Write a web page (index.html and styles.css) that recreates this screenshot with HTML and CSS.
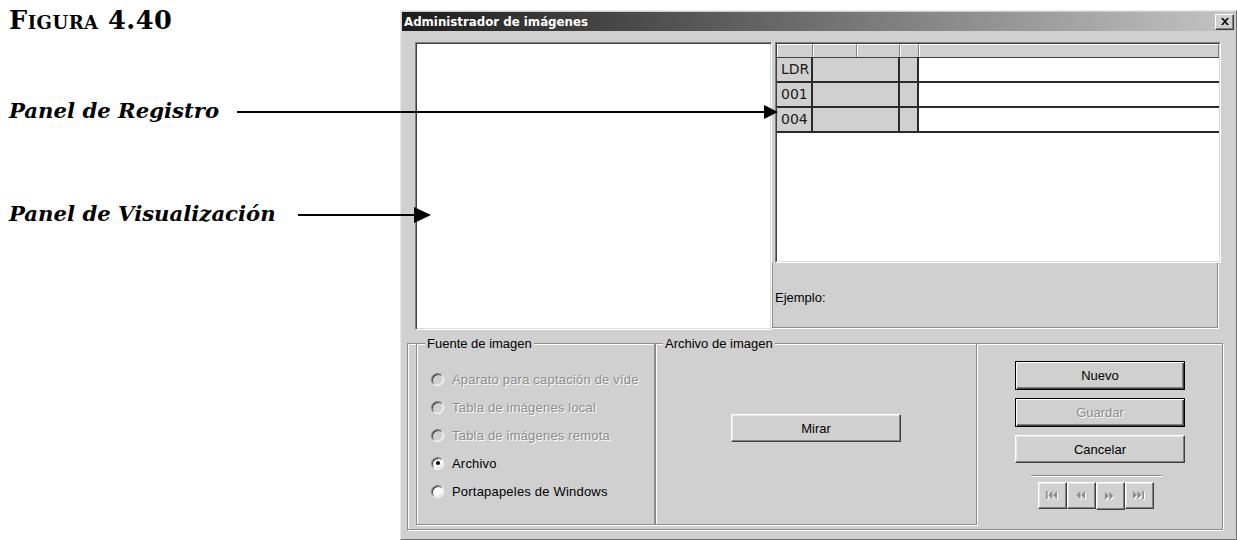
FILE: index.html
```html
<!DOCTYPE html>
<html lang="es">
<head>
    <meta charset="UTF-8">
    <title>Figura 4.40 - Administrador de imágenes</title>
    <link rel="stylesheet" href="styles.css">
</head>
<body>
<div id="page-wrapper">
    <div id="notes">
        <h1 class="fig-title">Figura 4.40</h1>
        <p class="note note-registro">Panel de Registro</p>
        <p class="note note-visual">Panel de Visualización</p>
    </div>

    <div id="win">
        <div class="titlebar">
            <span class="title">Administrador de imágenes</span>
            <span class="close-btn">
                <svg width="8" height="7" viewBox="0 0 8 7"><path d="M0 0h2l2 2.2 2-2.2h2l-3 3.5 3 3.5h-2l-2-2.2-2 2.2h-2l3-3.5z" fill="#000"/></svg>
            </span>
        </div>
        <div class="win-body">
            <div class="top-row">
                <div class="viewer"></div>
                <div class="record-col">
                    <div class="grid">
                        <div class="grid-inner">
                            <div class="grid-head">
                                <span class="hc hc-tag"></span>
                                <span class="hc hc-i1"></span>
                                <span class="hc hc-i2"></span>
                                <span class="hc hc-sf"></span>
                                <span class="hc hc-data"></span>
                            </div>
                            <div class="grid-row">
                                <span class="c-tag">LDR</span><span class="c-ind"></span><span class="c-sf"></span><span class="c-data"></span>
                            </div>
                            <div class="grid-row">
                                <span class="c-tag">001</span><span class="c-ind"></span><span class="c-sf"></span><span class="c-data"></span>
                            </div>
                            <div class="grid-row">
                                <span class="c-tag">004</span><span class="c-ind"></span><span class="c-sf"></span><span class="c-data"></span>
                            </div>
                        </div>
                    </div>
                    <div class="sample">Ejemplo:</div>
                </div>
            </div>

            <div class="bottom">
                <fieldset class="grp grp-src">
                    <legend>Fuente de imagen</legend>
                    <div class="grp-body">
                        <label class="radio disabled"><span class="dot"></span>Aparato para captación de víde</label>
                        <label class="radio disabled"><span class="dot"></span>Tabla de imágenes local</label>
                        <label class="radio disabled"><span class="dot"></span>Tabla de imágenes remota</label>
                        <label class="radio checked"><span class="dot"></span>Archivo</label>
                        <label class="radio"><span class="dot"></span>Portapapeles de Windows</label>
                    </div>
                </fieldset>
                <fieldset class="grp grp-file">
                    <legend>Archivo de imagen</legend>
                    <div class="grp-body">
                        <button type="button" class="btn btn-mirar">Mirar</button>
                    </div>
                </fieldset>
                <div class="actions">
                    <button type="button" class="btn btn-default">Nuevo</button>
                    <button type="button" class="btn btn-default is-disabled">Guardar</button>
                    <button type="button" class="btn">Cancelar</button>
                    <div class="sep"></div>
                    <div class="nav">
                        <button type="button" class="btn nav-btn">
                            <svg width="13" height="9" viewBox="0 0 13 9">
                                <g fill="#fff" transform="translate(1 1)"><rect x="0" y="0" width="1.6" height="8"/><path d="M6.5 0L2.5 4 6.5 8z"/><path d="M11 0L7 4 11 8z"/></g>
                                <g fill="#8c8c8c"><rect x="0" y="0" width="1.6" height="8"/><path d="M6.5 0L2.5 4 6.5 8z"/><path d="M11 0L7 4 11 8z"/></g>
                            </svg>
                        </button>
                        <button type="button" class="btn nav-btn">
                            <svg width="11" height="9" viewBox="0 0 11 9">
                                <g fill="#fff" transform="translate(1 1)"><path d="M4.5 0L0.5 4 4.5 8z"/><path d="M9 0L5 4 9 8z"/></g>
                                <g fill="#8c8c8c"><path d="M4.5 0L0.5 4 4.5 8z"/><path d="M9 0L5 4 9 8z"/></g>
                            </svg>
                        </button>
                        <button type="button" class="btn nav-btn">
                            <svg width="11" height="9" viewBox="0 0 11 9">
                                <g fill="#fff" transform="translate(1 1)"><path d="M0 0L4 4 0 8z"/><path d="M4.5 0L8.5 4 4.5 8z"/></g>
                                <g fill="#8c8c8c"><path d="M0 0L4 4 0 8z"/><path d="M4.5 0L8.5 4 4.5 8z"/></g>
                            </svg>
                        </button>
                        <button type="button" class="btn nav-btn">
                            <svg width="13" height="9" viewBox="0 0 13 9">
                                <g fill="#fff" transform="translate(1 1)"><path d="M0 0L4 4 0 8z"/><path d="M4.5 0L8.5 4 4.5 8z"/><rect x="9.4" y="0" width="1.6" height="8"/></g>
                                <g fill="#8c8c8c"><path d="M0 0L4 4 0 8z"/><path d="M4.5 0L8.5 4 4.5 8z"/><rect x="9.4" y="0" width="1.6" height="8"/></g>
                            </svg>
                        </button>
                    </div>
                </div>
            </div>
        </div>
    </div>

    <svg class="arrows" width="1237" height="540" viewBox="0 0 1237 540">
        <line x1="237" y1="112" x2="768" y2="112" stroke="#000" stroke-width="2"/>
        <path d="M764 105L778 112 764 119z" fill="#000"/>
        <line x1="298" y1="215" x2="418" y2="215" stroke="#000" stroke-width="2"/>
        <path d="M414 207L431 215 414 223z" fill="#000"/>
    </svg>
</div>
</body>
</html>
```

FILE: styles.css
```css
* {
    margin: 0;
    padding: 0;
    box-sizing: border-box;
}
html, body {
    height: 100%;
    background-color: #fff;
}
body {
    font-family: "Liberation Sans", Arial, sans-serif;
    font-size: 13px;
    color: #000;
}
#page-wrapper {
    position: relative;
    display: flex;
    width: 1237px;
    height: 540px;
    overflow: hidden;
}

/* annotations on the left */
#notes {
    width: 400px;
    flex-shrink: 0;
    padding: 7px 0 0 9px;
    font-family: "DejaVu Serif", serif;
}
.fig-title {
    font-size: 25.6px;
    line-height: 26px;
    font-weight: bold;
    font-variant: small-caps;
    letter-spacing: 0.5px;
}
.note {
    font-size: 21.2px;
    line-height: 24px;
    font-weight: bold;
    font-style: italic;
}
.note-registro {
    margin-top: 66px;
}
.note-visual {
    margin-top: 79px;
}
.arrows {
    position: absolute;
    left: 0;
    top: 0;
    pointer-events: none;
}

/* dialog window */
#win {
    width: 837px;
    height: 530px;
    margin-top: 10px;
    flex-shrink: 0;
    background-color: #d0d0d0;
    border: 1px solid;
    border-color: #e8e8e8 #707070 #707070 #e8e8e8;
    padding: 1px;
}
.titlebar {
    height: 19px;
    display: flex;
    align-items: center;
    justify-content: space-between;
    padding: 0 1px 0 2px;
    background: linear-gradient(to right, #1c1c1c, #c4c4c4);
}
.title {
    color: #fff;
    font-family: "DejaVu Sans", sans-serif;
    font-weight: bold;
    font-size: 11.8px;
}
.close-btn {
    width: 19px;
    height: 16px;
    display: flex;
    align-items: center;
    justify-content: center;
    background-color: #d0d0d0;
    border: 1px solid;
    border-color: #fff #404040 #404040 #fff;
    box-shadow: inset -1px -1px #808080;
}
.win-body {
    padding: 11px 0 0 5px;
}
.top-row {
    display: flex;
    height: 288px;
    margin-left: 8px;
}
.viewer {
    width: 357px;
    background-color: #fff;
    border: 1px solid;
    border-color: #808080 #fff #fff #808080;
    box-shadow: inset 1px 1px #404040, inset -1px -1px #dcdcdc;
}
.record-col {
    width: 449px;
    display: flex;
    flex-direction: column;
}

/* record grid */
.grid {
    margin-left: 3px;
    height: 221px;
    border: 1px solid;
    border-color: #808080 #fff #fff #808080;
}
.grid-inner {
    height: 100%;
    background-color: #fff;
    border: 1px solid;
    border-color: #404040 #dcdcdc #dcdcdc #404040;
    overflow: hidden;
}
.grid-head {
    display: flex;
    height: 14px;
    background-color: #d0d0d0;
    border-bottom: 1px solid #404040;
}
.hc {
    border-left: 1px solid #fff;
    border-top: 1px solid #fff;
    border-right: 1px solid #808080;
}
.hc-tag { width: 36px; }
.hc-i1 { width: 44px; }
.hc-i2 { width: 43px; }
.hc-sf { width: 19px; }
.hc-data { flex-grow: 1; }
.grid-row {
    display: flex;
    height: 25px;
    border-bottom: 2px solid #2a2a2a;
}
.grid-row span {
    background-color: #d0d0d0;
    border-right: 2px solid #2a2a2a;
}
.grid-row .c-tag {
    width: 36px;
    padding: 3px 0 0 4px;
    font-family: "DejaVu Sans", sans-serif;
    font-size: 14px;
    line-height: 16px;
    color: #1a1a1a;
}
.grid-row .c-ind { width: 87px; }
.grid-row .c-sf { width: 19px; }
.grid-row .c-data {
    flex-grow: 1;
    background-color: #fff;
    border-right: 0;
}
.sample {
    width: 446px;
    height: 65px;
    padding: 27px 0 0 2px;
    border: 1px solid #8c8c8c;
    border-top: 0;
    box-shadow: 1px 1px #fff;
}

/* bottom group */
.bottom {
    display: flex;
    width: 816px;
    height: 187px;
    margin-top: 13px;
    padding-left: 8px;
    border: 1px solid #8c8c8c;
    box-shadow: inset 1px 1px #fff, 1px 1px #fff;
}
.grp {
    margin-top: -8px;
    height: 189px;
    padding: 0;
    border: 1px solid #8c8c8c;
    box-shadow: inset 1px 1px #fff, 1px 1px #fff;
}
.grp legend {
    margin-left: 8px;
    padding: 0 2px;
    line-height: 15px;
    background-color: #d0d0d0;
}
.grp-src {
    width: 239px;
}
.grp-file {
    width: 322px;
}
.grp-file legend {
    margin-left: 7px;
}
.grp-src .grp-body {
    padding: 14px 0 0 14px;
}
.grp-file .grp-body {
    display: flex;
    justify-content: center;
    padding-top: 63px;
}
.radio {
    display: flex;
    align-items: center;
    gap: 8px;
    height: 28px;
    white-space: nowrap;
    letter-spacing: 0.2px;
}
.dot {
    position: relative;
    width: 13px;
    height: 13px;
    flex-shrink: 0;
    border-radius: 50%;
    border: 1px solid;
    border-color: #808080 #fff #fff #808080;
    box-shadow: inset 1px 1px #404040, inset -1px -1px #dcdcdc;
    background-color: #fff;
}
.radio.disabled {
    color: #8c8c8c;
    text-shadow: 1px 1px #fff;
}
.radio.disabled .dot {
    background-color: #d0d0d0;
}
.radio.checked .dot::after {
    content: "";
    position: absolute;
    left: 3.5px;
    top: 3.5px;
    width: 4px;
    height: 4px;
    border-radius: 50%;
    background-color: #000;
}

/* buttons */
.btn {
    font-family: "Liberation Sans", Arial, sans-serif;
    font-size: 13px;
    color: #000;
    background-color: #d0d0d0;
    border: 1px solid;
    border-color: #fff #404040 #404040 #fff;
    box-shadow: inset -1px -1px #808080, inset 1px 1px #e6e6e6;
}
.btn-mirar {
    width: 170px;
    height: 28px;
}
.btn-default {
    border: 1px solid #000;
    box-shadow: inset 1px 1px #fff, inset -1px -1px #404040, inset -2px -2px #808080;
}
.btn.is-disabled {
    color: #8c8c8c;
    text-shadow: 1px 1px #fff;
}
.actions {
    flex-grow: 1;
    display: flex;
    flex-direction: column;
    align-items: center;
    padding-top: 17px;
    margin-left: 1px;
}
.actions .btn {
    width: 170px;
    height: 29px;
    margin-bottom: 8px;
}
.actions .btn:nth-child(3) {
    height: 28px;
}
.sep {
    width: 131px;
    height: 2px;
    margin: 4px 7px 5px 0;
    border-top: 1px solid #8c8c8c;
    border-bottom: 1px solid #fff;
}
.nav {
    display: flex;
    margin-right: 9px;
}
.actions .nav-btn {
    width: 29px;
    height: 27px;
    margin: 0;
    display: flex;
    align-items: center;
    justify-content: center;
}
```
